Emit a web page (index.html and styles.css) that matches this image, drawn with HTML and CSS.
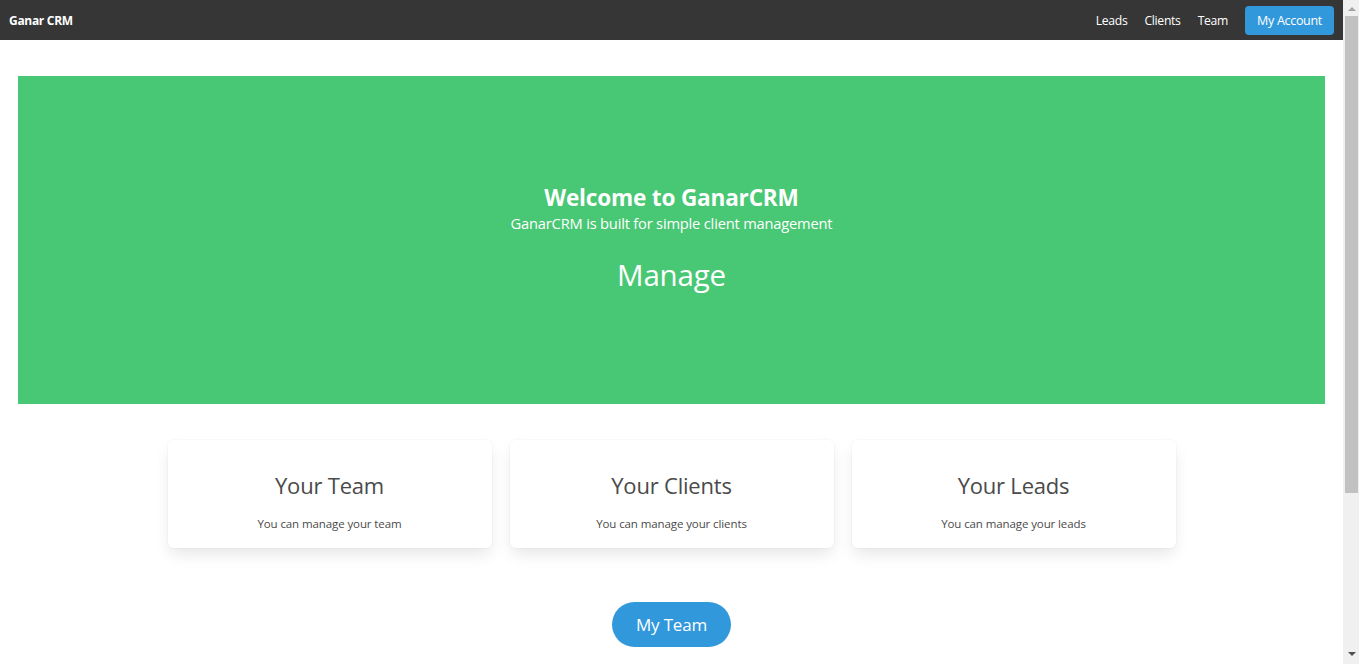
FILE: index.html
```html
<!DOCTYPE html>
<html lang="en">
<head>
<meta charset="utf-8">
<title>Ganar CRM</title>
<link rel="stylesheet" href="styles.css">
</head>
<body>
<div class="layout">
<div class="page">
<nav class="navbar">
  <a class="brand" href="#">Ganar CRM</a>
  <div class="nav-end">
    <a class="nav-item" href="#">Leads</a>
    <a class="nav-item" href="#">Clients</a>
    <a class="nav-item" href="#">Team</a>
    <a class="btn-account" href="#">My Account</a>
  </div>
</nav>
<main class="main">
  <section class="hero">
    <h1 class="hero-title">Welcome to GanarCRM</h1>
    <p class="hero-subtitle">GanarCRM is built for simple client management</p>
    <p class="hero-word">Manage</p>
  </section>
  <section class="cards">
    <div class="card">
      <h2 class="card-title">Your Team</h2>
      <p class="card-text">You can manage your team</p>
    </div>
    <div class="card">
      <h2 class="card-title">Your Clients</h2>
      <p class="card-text">You can manage your clients</p>
    </div>
    <div class="card">
      <h2 class="card-title">Your Leads</h2>
      <p class="card-text">You can manage your leads</p>
    </div>
  </section>
  <div class="cta">
    <a class="btn-team" href="#">My Team</a>
  </div>
</main>
</div>
<div class="scrollbar" aria-hidden="true">
  <div class="sb-btn">
    <svg width="8" height="4" viewBox="0 0 8 4"><path d="M0 4 L4 0 L8 4 Z" fill="#a3a3a3"/></svg>
  </div>
  <div class="sb-thumb"></div>
  <div class="sb-track"></div>
  <div class="sb-btn sb-btn-down">
    <svg width="8" height="4" viewBox="0 0 8 4"><path d="M0 0 L8 0 L4 4 Z" fill="#505050"/></svg>
  </div>
</div>
</div>
</body>
</html>
```

FILE: styles.css
```css
body {
  margin: 0;
  font-family: "Open Sans", "Noto Sans", sans-serif;
  color: #4a4a4a;
  background: #fff;
}
a { text-decoration: none; }
.layout {
  display: flex;
  align-items: flex-start;
}
.page {
  flex: 1;
  min-width: 0;
}
.scrollbar {
  position: sticky;
  top: 0;
  width: 16px;
  height: 100vh;
  background: #f0f0f0;
  display: flex;
  flex-direction: column;
  flex-shrink: 0;
}
.sb-btn {
  height: 15px;
  display: flex;
  align-items: center;
  justify-content: center;
  padding-left: 1px;
  padding-top: 1px;
}
.sb-btn-down {
  height: 17px;
  padding-top: 0;
  padding-bottom: 4px;
  box-sizing: border-box;
}
.sb-thumb {
  height: 477px;
  margin: 0 1px 0 2px;
  background: #c1c1c1;
}
.sb-track {
  flex: 1;
}
.navbar {
  height: 40px;
  background: #363636;
  display: flex;
  align-items: center;
  justify-content: space-between;
  padding: 0 9px;
}
.brand {
  color: #fff;
  font-weight: 700;
  font-size: 12px;
  letter-spacing: -0.3px;
}
.nav-end {
  display: flex;
  align-items: center;
}
.nav-item {
  color: #fff;
  font-size: 12.2px;
  letter-spacing: -0.3px;
  margin-right: 17px;
}
.btn-account {
  display: flex;
  align-items: center;
  height: 29px;
  padding: 0 12px;
  background: #3298dc;
  color: #fff;
  border-radius: 4px;
  font-size: 12.5px;
  letter-spacing: -0.3px;
}
.main {
  padding: 36px 18px 230px;
}
.hero {
  background: #48c774;
  height: 328px;
  box-sizing: border-box;
  padding-bottom: 4px;
  display: flex;
  flex-direction: column;
  align-items: center;
  justify-content: center;
  color: #fff;
  text-align: center;
}
.hero-title {
  margin: 0;
  font-size: 22.6px;
  font-weight: 700;
  line-height: 30px;
  letter-spacing: -0.2px;
}
.hero-subtitle {
  margin: 0;
  font-size: 14.7px;
  line-height: 20px;
  letter-spacing: -0.2px;
}
.hero-word {
  margin: 24px 0 0;
  font-size: 29.5px;
  line-height: 36px;
  letter-spacing: -0.2px;
}
.cards {
  display: grid;
  grid-template-columns: repeat(3, 324px);
  gap: 18px;
  justify-content: center;
  margin-top: 36px;
}
.card {
  height: 108px;
  background: #fff;
  border-radius: 6px;
  box-shadow: 0 0.5em 1em -0.125em rgba(10,10,10,0.1), 0 0 0 1px rgba(10,10,10,0.02);
  display: flex;
  flex-direction: column;
  align-items: center;
  justify-content: center;
  text-align: center;
}
.card-title {
  margin: 15px 0 0;
  font-size: 22px;
  font-weight: 400;
  line-height: 1.2;
  letter-spacing: -0.2px;
  color: #4a4a4a;
}
.card-text {
  margin: 18px 0 0;
  font-size: 11.5px;
  letter-spacing: -0.1px;
  color: #4a4a4a;
}
.cta {
  display: flex;
  justify-content: center;
  margin-top: 54px;
}
.btn-team {
  display: flex;
  align-items: center;
  height: 45px;
  padding: 0 24px;
  border-radius: 23px;
  background: #3298dc;
  color: #fff;
  font-size: 17px;
  letter-spacing: -0.2px;
}
```
